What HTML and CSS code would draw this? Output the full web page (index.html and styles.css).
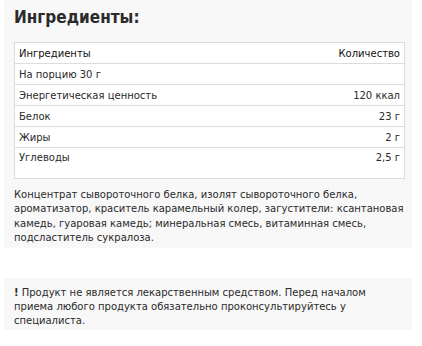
FILE: index.html
```html
<!DOCTYPE html>
<html lang="ru">
<head>
<meta charset="utf-8">
<link rel="stylesheet" href="styles.css">
</head>
<body>
<section class="panel">
  <h2 class="title">Ингредиенты:</h2>
  <table class="facts">
    <thead>
      <tr><th class="name">Ингредиенты</th><th class="amount">Количество</th></tr>
    </thead>
    <tbody>
      <tr><td class="name">На порцию 30 г</td><td class="amount"></td></tr>
      <tr><td class="name">Энергетическая ценность</td><td class="amount">120 ккал</td></tr>
      <tr><td class="name">Белок</td><td class="amount">23 г</td></tr>
      <tr><td class="name">Жиры</td><td class="amount">2 г</td></tr>
      <tr class="last"><td class="name">Углеводы</td><td class="amount">2,5 г</td></tr>
    </tbody>
  </table>
  <p class="composition">Концентрат сывороточного белка, изолят сывороточного белка, ароматизатор, краситель карамельный колер, загустители: ксантановая камедь, гуаровая камедь; минеральная смесь, витаминная смесь, подсластитель сукралоза.</p>
</section>
<section class="panel notice">
  <p><b class="mark">!</b> Продукт не является лекарственным средством. Перед началом приема любого продукта обязательно проконсультируйтесь у специалиста.</p>
</section>
</body>
</html>
```
FILE: styles.css
```css
html, body {
  margin: 0;
  padding: 0;
  background: #ffffff;
}
body {
  font-family: "DejaVu Sans", sans-serif;
  font-size: 10px;
  color: #2a2a2a;
  padding-left: 4px;
}
.panel {
  width: 398px;
  background: #f8f8f8;
  padding: 6px 0 3px 10px;
}
.title {
  margin: 0 0 14px 0;
  font-family: "DejaVu Sans Condensed", "DejaVu Sans", sans-serif;
  font-size: 17px;
  line-height: 22px;
  font-weight: bold;
  color: #2b2b2b;
}
.facts {
  width: 391px;
  border-collapse: collapse;
  background: #ffffff;
  border: 1px solid #dcdcdc;
}
.facts th, .facts td {
  height: 20px;
  padding: 0 4px;
  border-bottom: 1px solid #dcdcdc;
  font-weight: normal;
  text-align: left;
  vertical-align: middle;
}
.facts th {
  color: #111111;
}
.facts .amount {
  text-align: right;
}
.facts .last td {
  height: 26px;
  vertical-align: top;
  padding-top: 4px;
}
.composition {
  margin: 9px 0 0 0;
  line-height: 14.3px;
}
.notice {
  margin-top: 30px;
  padding-top: 8px;
  padding-bottom: 2px;
}
.notice p {
  margin: 0;
  max-width: 365px;
  line-height: 14px;
}
.mark {
  font-weight: bold;
}
```
